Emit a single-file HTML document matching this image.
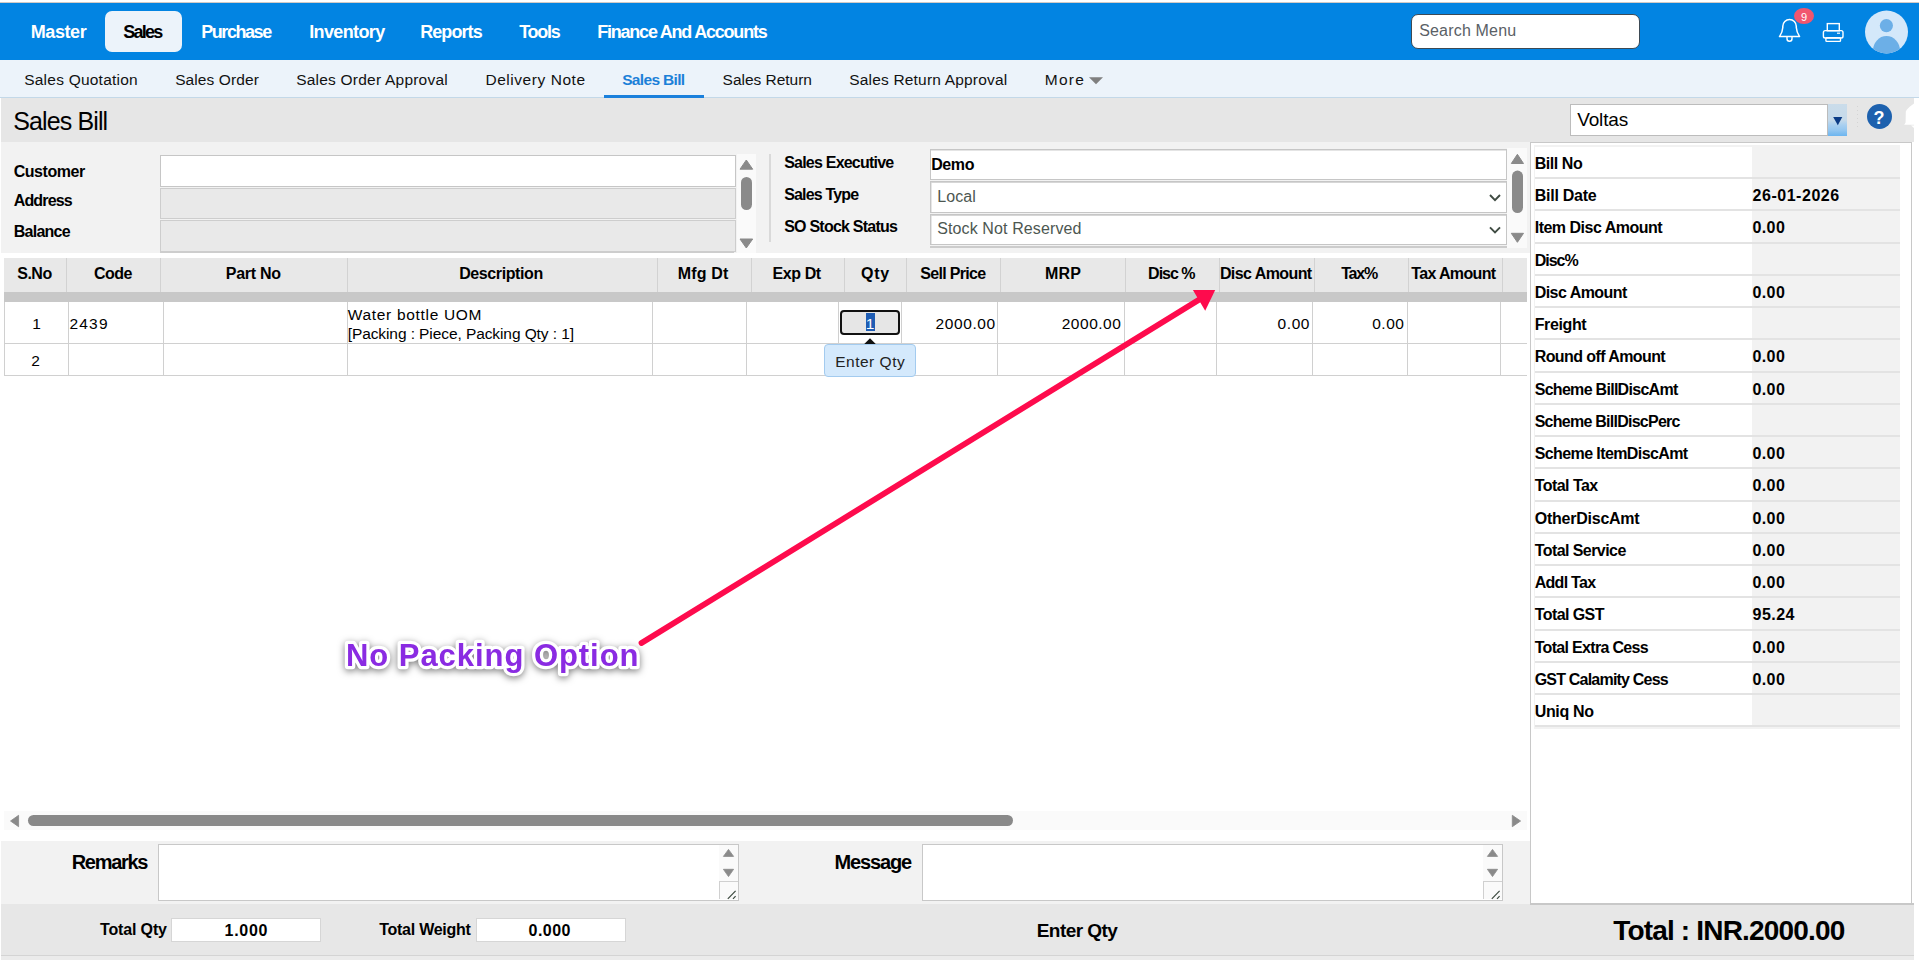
<!DOCTYPE html>
<html><head><meta charset="utf-8"><title>Sales Bill</title>
<style>
html,body{margin:0;padding:0;}
body{width:1919px;height:960px;overflow:hidden;position:relative;background:#fff;font-family:"Liberation Sans", sans-serif;}
.t{position:absolute;line-height:1;white-space:nowrap;}
</style></head><body>
<div style="position:absolute;left:0px;top:3px;width:1919px;height:57px;background:#0284e2"></div>
<div style="position:absolute;left:0px;top:2px;width:1919px;height:1px;background:#d2cac6"></div>
<div style="position:absolute;left:105px;top:11px;width:77px;height:41px;background:#ecf3fa;border-radius:7px"></div>
<div style="position:absolute;left:1411px;top:14px;width:227px;height:33px;background:#fff;border:1px solid #3d4a55;border-radius:7px"></div>
<div style="position:absolute;left:0px;top:60px;width:1919px;height:37px;background:#ecf3fa;border-bottom:1px solid #c3d8e8"></div>
<div style="position:absolute;left:604px;top:95.4px;width:100px;height:2.4px;background:#1a80dc"></div>
<div style="position:absolute;left:1px;top:98px;width:1913px;height:44px;background:#e6e6e6"></div>
<div style="position:absolute;left:1570px;top:104px;width:256px;height:30px;background:#fff;border:1px solid #bcbcbc"></div>
<div style="position:absolute;left:1828px;top:104.2px;width:19px;height:31.4px;background:linear-gradient(#cadcea 0%,#c6daea 50%,#a8cff0 66%,#93c6f0 82%,#6cb5ef 100%)"></div>
<div style="position:absolute;left:1857px;top:105.5px;width:1px;height:24.5px;background:repeating-linear-gradient(#d4d4d4 0 1px,transparent 1px 4px)"></div>
<div style="position:absolute;left:1867px;top:104px;width:25px;height:25px;background:#1d61ae;border-radius:50%"></div>
<div style="position:absolute;left:1px;top:142px;width:1529px;height:111px;background:#f2f2f2"></div>
<div style="position:absolute;left:160px;top:155px;width:574px;height:30px;background:#fff;border:1px solid #c6c6c6"></div>
<div style="position:absolute;left:160px;top:188px;width:574px;height:29px;background:#e9e9e9;border:1px solid #cdcdcd"></div>
<div style="position:absolute;left:160px;top:220px;width:574px;height:30px;background:#e9e9e9;border:1px solid #cdcdcd"></div>
<div style="position:absolute;left:160px;top:252px;width:574px;height:1px;background:#cdcdcd"></div>
<div style="position:absolute;left:737px;top:154px;width:19px;height:99px;background:#fafafa"></div>
<div style="position:absolute;left:769px;top:154px;width:2px;height:88px;background:#d9d9d9"></div>
<div style="position:absolute;left:930px;top:149px;width:575px;height:28.5px;background:#fff;border:1px solid #c6c6c6;box-shadow:inset 0 1px 0 #e4e4e4"></div>
<div style="position:absolute;left:930px;top:181.2px;width:575px;height:29.5px;background:#fff;border:1px solid #c6c6c6;box-shadow:inset 0 1px 0 #d6d6d6,inset 1px 0 0 #e6e6e6"></div>
<div style="position:absolute;left:930px;top:214.2px;width:575px;height:28.5px;background:#fff;border:1px solid #c6c6c6;box-shadow:inset 0 1px 0 #d6d6d6,inset 1px 0 0 #e6e6e6"></div>
<div style="position:absolute;left:930px;top:246.3px;width:577px;height:1.5px;background:#cccccc"></div>
<div style="position:absolute;left:1507px;top:148px;width:20px;height:100px;background:#fafafa"></div>
<div style="position:absolute;left:4px;top:258px;width:1523px;height:34px;background:#e8e8e8"></div>
<div style="position:absolute;left:66px;top:258px;width:1px;height:34px;background:#d2d2d2"></div>
<div style="position:absolute;left:160px;top:258px;width:1px;height:34px;background:#d2d2d2"></div>
<div style="position:absolute;left:347px;top:258px;width:1px;height:34px;background:#d2d2d2"></div>
<div style="position:absolute;left:657px;top:258px;width:1px;height:34px;background:#d2d2d2"></div>
<div style="position:absolute;left:751px;top:258px;width:1px;height:34px;background:#d2d2d2"></div>
<div style="position:absolute;left:844px;top:258px;width:1px;height:34px;background:#d2d2d2"></div>
<div style="position:absolute;left:906px;top:258px;width:1px;height:34px;background:#d2d2d2"></div>
<div style="position:absolute;left:1000px;top:258px;width:1px;height:34px;background:#d2d2d2"></div>
<div style="position:absolute;left:1125px;top:258px;width:1px;height:34px;background:#d2d2d2"></div>
<div style="position:absolute;left:1219px;top:258px;width:1px;height:34px;background:#d2d2d2"></div>
<div style="position:absolute;left:1314px;top:258px;width:1px;height:34px;background:#d2d2d2"></div>
<div style="position:absolute;left:1408px;top:258px;width:1px;height:34px;background:#d2d2d2"></div>
<div style="position:absolute;left:1502px;top:258px;width:1px;height:34px;background:#d2d2d2"></div>
<div style="position:absolute;left:4px;top:292px;width:1523px;height:10px;background:#c8c8c8"></div>
<div style="position:absolute;left:4px;top:302px;width:1px;height:74px;background:#d0d0d0"></div>
<div style="position:absolute;left:68px;top:302px;width:1px;height:74px;background:#d0d0d0"></div>
<div style="position:absolute;left:163px;top:302px;width:1px;height:74px;background:#d0d0d0"></div>
<div style="position:absolute;left:347px;top:302px;width:1px;height:74px;background:#d0d0d0"></div>
<div style="position:absolute;left:652px;top:302px;width:1px;height:74px;background:#d0d0d0"></div>
<div style="position:absolute;left:746px;top:302px;width:1px;height:74px;background:#d0d0d0"></div>
<div style="position:absolute;left:838px;top:302px;width:1px;height:74px;background:#d0d0d0"></div>
<div style="position:absolute;left:901px;top:302px;width:1px;height:74px;background:#d0d0d0"></div>
<div style="position:absolute;left:997px;top:302px;width:1px;height:74px;background:#d0d0d0"></div>
<div style="position:absolute;left:1124px;top:302px;width:1px;height:74px;background:#d0d0d0"></div>
<div style="position:absolute;left:1216px;top:302px;width:1px;height:74px;background:#d0d0d0"></div>
<div style="position:absolute;left:1312px;top:302px;width:1px;height:74px;background:#d0d0d0"></div>
<div style="position:absolute;left:1407px;top:302px;width:1px;height:74px;background:#d0d0d0"></div>
<div style="position:absolute;left:1500px;top:302px;width:1px;height:74px;background:#d0d0d0"></div>
<div style="position:absolute;left:4px;top:342.5px;width:1523px;height:1px;background:#d0d0d0"></div>
<div style="position:absolute;left:4px;top:375px;width:1523px;height:1px;background:#d0d0d0"></div>
<div style="position:absolute;left:840px;top:310px;width:56px;height:21px;background:#e6e6e6;border:2px solid #111;border-radius:4px"></div>
<div style="position:absolute;left:866px;top:313px;width:9px;height:18px;background:#1f5db4"></div>
<svg style="position:absolute;left:0;top:0" width="1919" height="960"><polygon points="864,344.2 870,338.2 876,344.2" fill="#111"/></svg>
<div style="position:absolute;left:824.2px;top:344.2px;width:89.5px;height:30.5px;background:#d4e9fc;border:1px solid #a3cbef;border-radius:4px"></div>
<div style="position:absolute;left:4px;top:811px;width:1523px;height:19px;background:#fafafa"></div>
<div style="position:absolute;left:27.5px;top:815px;width:985.5px;height:11px;background:#898989;border-radius:6px"></div>
<div style="position:absolute;left:1px;top:841px;width:1529px;height:63px;background:#f2f2f2"></div>
<div style="position:absolute;left:158px;top:844px;width:579px;height:55px;background:#fff;border:1px solid #c8c8c8"></div>
<div style="position:absolute;left:922px;top:844px;width:579px;height:55px;background:#fff;border:1px solid #c8c8c8"></div>
<div style="position:absolute;left:719px;top:845px;width:19px;height:36px;background:#fafafa"></div>
<div style="position:absolute;left:719px;top:881px;width:18px;height:17px;background:#fafafa;border-left:1px solid #d0d0d0;border-top:1px solid #d0d0d0"></div>
<div style="position:absolute;left:1483px;top:845px;width:19px;height:36px;background:#fafafa"></div>
<div style="position:absolute;left:1483px;top:881px;width:18px;height:17px;background:#fafafa;border-left:1px solid #d0d0d0;border-top:1px solid #d0d0d0"></div>
<div style="position:absolute;left:1530px;top:142px;width:380px;height:761px;background:#fff;border:1px solid #c8c8c8"></div>
<div style="position:absolute;left:1533.5px;top:145px;width:366.5px;height:583.5px;background:#f2f2f2"></div>
<div style="position:absolute;left:1534.5px;top:147.0px;width:217.5px;height:30.24px;background:#fff"></div>
<div style="position:absolute;left:1534.5px;top:177.24px;width:365px;height:2px;background:#e3e3e3"></div>
<div style="position:absolute;left:1534.5px;top:179.24px;width:217.5px;height:30.24px;background:#fff"></div>
<div style="position:absolute;left:1534.5px;top:209.48px;width:365px;height:2px;background:#e3e3e3"></div>
<div style="position:absolute;left:1534.5px;top:211.48px;width:217.5px;height:30.24px;background:#fff"></div>
<div style="position:absolute;left:1534.5px;top:241.72px;width:365px;height:2px;background:#e3e3e3"></div>
<div style="position:absolute;left:1534.5px;top:243.72px;width:217.5px;height:30.24px;background:#fff"></div>
<div style="position:absolute;left:1534.5px;top:273.96px;width:365px;height:2px;background:#e3e3e3"></div>
<div style="position:absolute;left:1534.5px;top:275.96px;width:217.5px;height:30.24px;background:#fff"></div>
<div style="position:absolute;left:1534.5px;top:306.2px;width:365px;height:2px;background:#e3e3e3"></div>
<div style="position:absolute;left:1534.5px;top:308.2px;width:217.5px;height:30.24px;background:#fff"></div>
<div style="position:absolute;left:1534.5px;top:338.44px;width:365px;height:2px;background:#e3e3e3"></div>
<div style="position:absolute;left:1534.5px;top:340.44px;width:217.5px;height:30.24px;background:#fff"></div>
<div style="position:absolute;left:1534.5px;top:370.68px;width:365px;height:2px;background:#e3e3e3"></div>
<div style="position:absolute;left:1534.5px;top:372.68px;width:217.5px;height:30.24px;background:#fff"></div>
<div style="position:absolute;left:1534.5px;top:402.92px;width:365px;height:2px;background:#e3e3e3"></div>
<div style="position:absolute;left:1534.5px;top:404.92px;width:217.5px;height:30.24px;background:#fff"></div>
<div style="position:absolute;left:1534.5px;top:435.16px;width:365px;height:2px;background:#e3e3e3"></div>
<div style="position:absolute;left:1534.5px;top:437.16px;width:217.5px;height:30.24px;background:#fff"></div>
<div style="position:absolute;left:1534.5px;top:467.4px;width:365px;height:2px;background:#e3e3e3"></div>
<div style="position:absolute;left:1534.5px;top:469.4px;width:217.5px;height:30.24px;background:#fff"></div>
<div style="position:absolute;left:1534.5px;top:499.64px;width:365px;height:2px;background:#e3e3e3"></div>
<div style="position:absolute;left:1534.5px;top:501.64px;width:217.5px;height:30.24px;background:#fff"></div>
<div style="position:absolute;left:1534.5px;top:531.88px;width:365px;height:2px;background:#e3e3e3"></div>
<div style="position:absolute;left:1534.5px;top:533.88px;width:217.5px;height:30.24px;background:#fff"></div>
<div style="position:absolute;left:1534.5px;top:564.12px;width:365px;height:2px;background:#e3e3e3"></div>
<div style="position:absolute;left:1534.5px;top:566.12px;width:217.5px;height:30.24px;background:#fff"></div>
<div style="position:absolute;left:1534.5px;top:596.36px;width:365px;height:2px;background:#e3e3e3"></div>
<div style="position:absolute;left:1534.5px;top:598.36px;width:217.5px;height:30.24px;background:#fff"></div>
<div style="position:absolute;left:1534.5px;top:628.6px;width:365px;height:2px;background:#e3e3e3"></div>
<div style="position:absolute;left:1534.5px;top:630.6px;width:217.5px;height:30.24px;background:#fff"></div>
<div style="position:absolute;left:1534.5px;top:660.84px;width:365px;height:2px;background:#e3e3e3"></div>
<div style="position:absolute;left:1534.5px;top:662.84px;width:217.5px;height:30.24px;background:#fff"></div>
<div style="position:absolute;left:1534.5px;top:693.08px;width:365px;height:2px;background:#e3e3e3"></div>
<div style="position:absolute;left:1534.5px;top:695.08px;width:217.5px;height:30.24px;background:#fff"></div>
<div style="position:absolute;left:1534.5px;top:725.32px;width:365px;height:2px;background:#e3e3e3"></div>
<div style="position:absolute;left:1px;top:904px;width:1913px;height:51px;background:#e7e7e7;border-bottom:1px solid #d4d4d4"></div>
<div style="position:absolute;left:1px;top:956px;width:1913px;height:4px;background:#ebebeb"></div>
<div style="position:absolute;left:1530px;top:903px;width:384px;height:1.5px;background:#c8c8c8"></div>
<div style="position:absolute;left:170.5px;top:917.5px;width:148px;height:22.5px;background:#fff;border:1px solid #d6d6d6"></div>
<div style="position:absolute;left:475.5px;top:917.5px;width:148px;height:22.5px;background:#fff;border:1px solid #d6d6d6"></div>
<svg style="position:absolute;left:0;top:0;overflow:visible" width="1919" height="960">
  <!-- bell -->
  <path d="M1780,36.6 L1799.6,36.6 Q1796.6,32.5 1796.3,27.5 L1796.3,26.3 A6.75,6.75 0 0 0 1782.8,26.3 L1782.8,27.5 Q1782.5,32.5 1779.5,36.6 Z" fill="none" stroke="#fff" stroke-width="1.5" stroke-linejoin="round"/>
  <path d="M1787,37 L1787,38.8 A2.5,2.5 0 0 0 1792,38.8 L1792,37" fill="none" stroke="#fff" stroke-width="1.4"/>
  <!-- badge -->
  <ellipse cx="1804" cy="16" rx="10" ry="8.1" fill="#f1566f"/>
  <!-- printer -->
  <rect x="1827.3" y="23.6" width="12" height="7.2" fill="none" stroke="#fff" stroke-width="1.4"/>
  <rect x="1823.4" y="30.6" width="19.6" height="7.4" rx="1.8" fill="none" stroke="#fff" stroke-width="1.4"/>
  <rect x="1825.9" y="37.8" width="14.6" height="3.6" rx="0.8" fill="none" stroke="#fff" stroke-width="1.4"/>
  <rect x="1837" y="32.6" width="3" height="1.2" fill="#fff"/>
  <!-- avatar -->
  <defs><clipPath id="avc"><circle cx="1886.5" cy="32" r="21.5"/></clipPath></defs>
  <circle cx="1886.5" cy="32" r="21.5" fill="#d4e8fa"/>
  <circle cx="1886.4" cy="25.6" r="6.6" fill="#6cafe7"/>
  <ellipse cx="1886.5" cy="51" rx="13.6" ry="15" fill="#6cafe7" clip-path="url(#avc)"/>
  <!-- more triangle -->
  <polygon points="1089,77.2 1103,77.2 1096,84.2" fill="#7f7f7f"/>
  <!-- voltas dropdown -->
  <polygon points="1833.2,117 1842.3,117 1837.8,125.2" fill="#0c3c86"/>
  <!-- title right white blob -->
  <path d="M1914,103.5 L1912,105 Q1907,108.5 1905.8,111.5 L1905.6,122.5 L1904.2,124.8 L1914,124.8 Z" fill="#fff"/><path d="M1911,125.5 L1914,128 L1914,125.5 Z" fill="#fff"/>
  <!-- left form scrollbar -->
  <polygon points="740,169.2 752.7,169.2 746.3,160" fill="#8a8a8a" stroke="#8a8a8a" stroke-width="1" stroke-linejoin="round"/>
  <rect x="741" y="177" width="11" height="33" rx="5.5" fill="#8a8a8a"/>
  <polygon points="740,239 752.7,239 746.3,248" fill="#8a8a8a" stroke="#8a8a8a" stroke-width="1" stroke-linejoin="round"/>
  <!-- right form scrollbar -->
  <polygon points="1511.3,163.5 1523.5,163.5 1517.4,154.3" fill="#8a8a8a" stroke="#8a8a8a" stroke-width="1" stroke-linejoin="round"/>
  <rect x="1512" y="170.6" width="11" height="42.4" rx="5.5" fill="#8a8a8a"/>
  <polygon points="1511.3,233.3 1523.5,233.3 1517.4,242.3" fill="#8a8a8a" stroke="#8a8a8a" stroke-width="1" stroke-linejoin="round"/>
  <!-- chevrons -->
  <polyline points="1490,195 1495,200.2 1500,195" fill="none" stroke="#3f4b42" stroke-width="1.9"/>
  <polyline points="1490,227.3 1495,232.5 1500,227.3" fill="none" stroke="#3f4b42" stroke-width="1.9"/>
  <!-- h scroll arrows -->
  <polygon points="10.5,821 18.6,815.3 18.6,826.7" fill="#898989" stroke="#898989" stroke-width="0.8" stroke-linejoin="round"/>
  <polygon points="1512.3,815.3 1520.6,821 1512.3,826.7" fill="#898989" stroke="#898989" stroke-width="0.8" stroke-linejoin="round"/>
  <!-- textarea arrows & resize -->
  <g id="ta1">
    <polygon points="723.4,856.4 733.6,856.4 728.5,849.4" fill="#8a8a8a" stroke="#8a8a8a" stroke-width="0.8" stroke-linejoin="round"/>
    <polygon points="723.4,869.3 733.6,869.3 728.5,876.6" fill="#8a8a8a" stroke="#8a8a8a" stroke-width="0.8" stroke-linejoin="round"/>
    <line x1="727.8" y1="898.8" x2="735.6" y2="890.8" stroke="#3a473d" stroke-width="1.2"/>
    <line x1="733" y1="898.8" x2="735.6" y2="896.2" stroke="#3a473d" stroke-width="1.2"/>
  </g>
  <use href="#ta1" x="764" y="0"/>
  <!-- annotation arrow -->
  <line x1="641.5" y1="643" x2="1201" y2="298.5" stroke="#fe0b4d" stroke-width="5.8" stroke-linecap="round"/>
  <polygon points="1192.9,290 1215.2,290 1205.2,310.8" fill="#fe0b4d"/>
  <!-- annotation text -->
  <text x="346" y="665.5" font-family="Liberation Sans" font-weight="700" font-size="31" letter-spacing="0.95" fill="#8a2be2" stroke="#fff" stroke-width="6.5" stroke-linejoin="round" paint-order="stroke" style="filter:drop-shadow(0px 2px 3.5px rgba(0,0,0,0.5))">No Packing Option</text>
</svg>

<span class="t" style="left:30.70px;top:23.26px;font-size:18px;font-weight:700;color:#fff;letter-spacing:-0.406px;">Master</span>
<span class="t" style="left:123.20px;top:23.26px;font-size:18px;font-weight:700;color:#000;letter-spacing:-1.762px;">Sales</span>
<span class="t" style="left:201.20px;top:23.26px;font-size:18px;font-weight:700;color:#fff;letter-spacing:-1.435px;">Purchase</span>
<span class="t" style="left:309.20px;top:23.26px;font-size:18px;font-weight:700;color:#fff;letter-spacing:-0.629px;">Inventory</span>
<span class="t" style="left:420.20px;top:23.26px;font-size:18px;font-weight:700;color:#fff;letter-spacing:-0.919px;">Reports</span>
<span class="t" style="left:519.20px;top:23.26px;font-size:18px;font-weight:700;color:#fff;letter-spacing:-1.293px;">Tools</span>
<span class="t" style="left:597.20px;top:23.26px;font-size:18px;font-weight:700;color:#fff;letter-spacing:-1.220px;">Finance And Accounts</span>
<span class="t" style="left:1801.00px;top:11.69px;font-size:11px;font-weight:400;color:#fff;letter-spacing:0.875px;">9</span>
<span class="t" style="left:1419.20px;top:23.46px;font-size:16px;font-weight:400;color:#5a6066;letter-spacing:0.183px;">Search Menu</span>
<span class="t" style="left:24.20px;top:71.88px;font-size:15.5px;font-weight:400;color:#111;letter-spacing:0.229px;">Sales Quotation</span>
<span class="t" style="left:175.20px;top:71.88px;font-size:15.5px;font-weight:400;color:#111;letter-spacing:0.090px;">Sales Order</span>
<span class="t" style="left:296.20px;top:71.88px;font-size:15.5px;font-weight:400;color:#111;letter-spacing:0.220px;">Sales Order Approval</span>
<span class="t" style="left:485.40px;top:71.88px;font-size:15.5px;font-weight:400;color:#111;letter-spacing:0.556px;">Delivery Note</span>
<span class="t" style="left:622.20px;top:71.88px;font-size:15.5px;font-weight:700;color:#1b80d8;letter-spacing:-0.660px;">Sales Bill</span>
<span class="t" style="left:722.60px;top:71.88px;font-size:15.5px;font-weight:400;color:#111;letter-spacing:-0.028px;">Sales Return</span>
<span class="t" style="left:849.20px;top:71.88px;font-size:15.5px;font-weight:400;color:#111;letter-spacing:0.188px;">Sales Return Approval</span>
<span class="t" style="left:1044.70px;top:71.88px;font-size:15.5px;font-weight:400;color:#111;letter-spacing:1.291px;">More</span>
<span class="t" style="left:13.20px;top:108.84px;font-size:25px;font-weight:400;color:#000;letter-spacing:-0.870px;">Sales Bill</span>
<span class="t" style="left:1577.20px;top:109.72px;font-size:19px;font-weight:400;color:#000;letter-spacing:-0.153px;">Voltas</span>
<span class="t" style="left:1873.50px;top:108.76px;font-size:18px;font-weight:700;color:#fff;">?</span>
<span class="t" style="left:13.70px;top:163.96px;font-size:16px;font-weight:700;color:#000;letter-spacing:-0.455px;">Customer</span>
<span class="t" style="left:13.70px;top:192.96px;font-size:16px;font-weight:700;color:#000;letter-spacing:-0.839px;">Address</span>
<span class="t" style="left:13.70px;top:224.46px;font-size:16px;font-weight:700;color:#000;letter-spacing:-0.729px;">Balance</span>
<span class="t" style="left:784.20px;top:155.46px;font-size:16px;font-weight:700;color:#000;letter-spacing:-0.783px;">Sales Executive</span>
<span class="t" style="left:784.20px;top:187.46px;font-size:16px;font-weight:700;color:#000;letter-spacing:-0.825px;">Sales Type</span>
<span class="t" style="left:784.20px;top:219.26px;font-size:16px;font-weight:700;color:#000;letter-spacing:-0.770px;">SO Stock Status</span>
<span class="t" style="left:931.20px;top:157.46px;font-size:16px;font-weight:700;color:#000;letter-spacing:-0.384px;">Demo</span>
<span class="t" style="left:937.20px;top:189.16px;font-size:16px;font-weight:400;color:#4d5751;letter-spacing:0.088px;">Local</span>
<span class="t" style="left:937.20px;top:221.36px;font-size:16px;font-weight:400;color:#4d5751;letter-spacing:0.119px;">Stock Not Reserved</span>
<span class="t" style="left:17.20px;top:266.46px;font-size:16px;font-weight:700;color:#000;letter-spacing:-0.484px;">S.No</span>
<span class="t" style="left:93.90px;top:266.46px;font-size:16px;font-weight:700;color:#000;letter-spacing:-0.467px;">Code</span>
<span class="t" style="left:225.80px;top:266.46px;font-size:16px;font-weight:700;color:#000;letter-spacing:-0.268px;">Part No</span>
<span class="t" style="left:459.20px;top:266.46px;font-size:16px;font-weight:700;color:#000;letter-spacing:-0.402px;">Description</span>
<span class="t" style="left:677.70px;top:266.46px;font-size:16px;font-weight:700;color:#000;letter-spacing:0.187px;">Mfg Dt</span>
<span class="t" style="left:772.40px;top:266.46px;font-size:16px;font-weight:700;color:#000;letter-spacing:-0.374px;">Exp Dt</span>
<span class="t" style="left:861.00px;top:266.46px;font-size:16px;font-weight:700;color:#000;letter-spacing:0.764px;">Qty</span>
<span class="t" style="left:920.20px;top:266.46px;font-size:16px;font-weight:700;color:#000;letter-spacing:-0.672px;">Sell Price</span>
<span class="t" style="left:1044.90px;top:266.46px;font-size:16px;font-weight:700;color:#000;letter-spacing:0.219px;">MRP</span>
<span class="t" style="left:1148.10px;top:266.46px;font-size:16px;font-weight:700;color:#000;letter-spacing:-0.994px;">Disc %</span>
<span class="t" style="left:1219.90px;top:266.46px;font-size:16px;font-weight:700;color:#000;letter-spacing:-0.578px;">Disc Amount</span>
<span class="t" style="left:1341.20px;top:266.46px;font-size:16px;font-weight:700;color:#000;letter-spacing:-1.203px;">Tax%</span>
<span class="t" style="left:1411.20px;top:266.46px;font-size:16px;font-weight:700;color:#000;letter-spacing:-0.630px;">Tax Amount</span>
<span class="t" style="left:32.20px;top:315.88px;font-size:15.5px;font-weight:400;color:#000;letter-spacing:0.375px;">1</span>
<span class="t" style="left:31.20px;top:352.88px;font-size:15.5px;font-weight:400;color:#000;letter-spacing:1.375px;">2</span>
<span class="t" style="left:69.50px;top:315.88px;font-size:15.5px;font-weight:400;color:#000;letter-spacing:1.172px;">2439</span>
<span class="t" style="left:347.70px;top:306.68px;font-size:15.5px;font-weight:400;color:#000;letter-spacing:0.689px;">Water bottle UOM</span>
<span class="t" style="left:347.70px;top:325.88px;font-size:15.5px;font-weight:400;color:#000;letter-spacing:-0.087px;">[Packing : Piece, Packing Qty : 1]</span>
<span class="t" style="left:935.60px;top:315.88px;font-size:15.5px;font-weight:400;color:#000;letter-spacing:0.595px;">2000.00</span>
<span class="t" style="left:1061.70px;top:315.88px;font-size:15.5px;font-weight:400;color:#000;letter-spacing:0.528px;">2000.00</span>
<span class="t" style="left:1277.50px;top:315.88px;font-size:15.5px;font-weight:400;color:#000;letter-spacing:0.609px;">0.00</span>
<span class="t" style="left:1372.20px;top:315.88px;font-size:15.5px;font-weight:400;color:#000;letter-spacing:0.509px;">0.00</span>
<span class="t" style="left:865.70px;top:315.88px;font-size:15.5px;font-weight:400;color:#fff;letter-spacing:-0.625px;">1</span>
<span class="t" style="left:835.20px;top:354.18px;font-size:15.5px;font-weight:400;color:#222;letter-spacing:0.504px;">Enter Qty</span>
<span class="t" style="left:71.70px;top:851.87px;font-size:20px;font-weight:700;color:#000;letter-spacing:-1.286px;">Remarks</span>
<span class="t" style="left:834.50px;top:851.87px;font-size:20px;font-weight:700;color:#000;letter-spacing:-1.133px;">Message</span>
<span class="t" style="left:1534.70px;top:155.96px;font-size:16px;font-weight:700;color:#000;letter-spacing:-0.445px;">Bill No</span>
<span class="t" style="left:1534.70px;top:188.16px;font-size:16px;font-weight:700;color:#000;letter-spacing:-0.252px;">Bill Date</span>
<span class="t" style="left:1752.50px;top:188.16px;font-size:16px;font-weight:700;color:#000;letter-spacing:0.540px;">26-01-2026</span>
<span class="t" style="left:1534.70px;top:220.46px;font-size:16px;font-weight:700;color:#000;letter-spacing:-0.495px;">Item Disc Amount</span>
<span class="t" style="left:1752.50px;top:220.46px;font-size:16px;font-weight:700;color:#000;letter-spacing:0.386px;">0.00</span>
<span class="t" style="left:1534.70px;top:252.66px;font-size:16px;font-weight:700;color:#000;letter-spacing:-1.008px;">Disc%</span>
<span class="t" style="left:1534.70px;top:284.96px;font-size:16px;font-weight:700;color:#000;letter-spacing:-0.538px;">Disc Amount</span>
<span class="t" style="left:1752.50px;top:284.96px;font-size:16px;font-weight:700;color:#000;letter-spacing:0.386px;">0.00</span>
<span class="t" style="left:1534.70px;top:317.16px;font-size:16px;font-weight:700;color:#000;letter-spacing:-0.370px;">Freight</span>
<span class="t" style="left:1534.70px;top:349.36px;font-size:16px;font-weight:700;color:#000;letter-spacing:-0.588px;">Round off Amount</span>
<span class="t" style="left:1752.50px;top:349.36px;font-size:16px;font-weight:700;color:#000;letter-spacing:0.386px;">0.00</span>
<span class="t" style="left:1534.70px;top:381.66px;font-size:16px;font-weight:700;color:#000;letter-spacing:-0.706px;">Scheme BillDiscAmt</span>
<span class="t" style="left:1752.50px;top:381.66px;font-size:16px;font-weight:700;color:#000;letter-spacing:0.386px;">0.00</span>
<span class="t" style="left:1534.70px;top:413.86px;font-size:16px;font-weight:700;color:#000;letter-spacing:-0.745px;">Scheme BillDiscPerc</span>
<span class="t" style="left:1534.70px;top:446.16px;font-size:16px;font-weight:700;color:#000;letter-spacing:-0.596px;">Scheme ItemDiscAmt</span>
<span class="t" style="left:1752.50px;top:446.16px;font-size:16px;font-weight:700;color:#000;letter-spacing:0.386px;">0.00</span>
<span class="t" style="left:1534.70px;top:478.36px;font-size:16px;font-weight:700;color:#000;letter-spacing:-0.545px;">Total Tax</span>
<span class="t" style="left:1752.50px;top:478.36px;font-size:16px;font-weight:700;color:#000;letter-spacing:0.386px;">0.00</span>
<span class="t" style="left:1534.70px;top:510.56px;font-size:16px;font-weight:700;color:#000;letter-spacing:-0.234px;">OtherDiscAmt</span>
<span class="t" style="left:1752.50px;top:510.56px;font-size:16px;font-weight:700;color:#000;letter-spacing:0.386px;">0.00</span>
<span class="t" style="left:1534.70px;top:542.86px;font-size:16px;font-weight:700;color:#000;letter-spacing:-0.568px;">Total Service</span>
<span class="t" style="left:1752.50px;top:542.86px;font-size:16px;font-weight:700;color:#000;letter-spacing:0.386px;">0.00</span>
<span class="t" style="left:1534.70px;top:575.06px;font-size:16px;font-weight:700;color:#000;letter-spacing:-0.711px;">Addl Tax</span>
<span class="t" style="left:1752.50px;top:575.06px;font-size:16px;font-weight:700;color:#000;letter-spacing:0.386px;">0.00</span>
<span class="t" style="left:1534.70px;top:607.36px;font-size:16px;font-weight:700;color:#000;letter-spacing:-0.572px;">Total GST</span>
<span class="t" style="left:1752.50px;top:607.36px;font-size:16px;font-weight:700;color:#000;letter-spacing:0.488px;">95.24</span>
<span class="t" style="left:1534.70px;top:639.56px;font-size:16px;font-weight:700;color:#000;letter-spacing:-0.680px;">Total Extra Cess</span>
<span class="t" style="left:1752.50px;top:639.56px;font-size:16px;font-weight:700;color:#000;letter-spacing:0.386px;">0.00</span>
<span class="t" style="left:1534.70px;top:671.76px;font-size:16px;font-weight:700;color:#000;letter-spacing:-0.796px;">GST Calamity Cess</span>
<span class="t" style="left:1752.50px;top:671.76px;font-size:16px;font-weight:700;color:#000;letter-spacing:0.386px;">0.00</span>
<span class="t" style="left:1534.70px;top:704.06px;font-size:16px;font-weight:700;color:#000;letter-spacing:-0.338px;">Uniq No</span>
<span class="t" style="left:100.00px;top:922.46px;font-size:16px;font-weight:700;color:#000;letter-spacing:-0.145px;">Total Qty</span>
<span class="t" style="left:224.50px;top:922.66px;font-size:16px;font-weight:700;color:#000;letter-spacing:0.738px;">1.000</span>
<span class="t" style="left:379.20px;top:922.46px;font-size:16px;font-weight:700;color:#000;letter-spacing:-0.256px;">Total Weight</span>
<span class="t" style="left:528.50px;top:922.66px;font-size:16px;font-weight:700;color:#000;letter-spacing:0.488px;">0.000</span>
<span class="t" style="left:1036.70px;top:920.92px;font-size:19px;font-weight:700;color:#000;letter-spacing:-0.541px;">Enter Qty</span>
<span class="t" style="left:1613.20px;top:916.70px;font-size:28px;font-weight:700;color:#000;letter-spacing:-0.817px;">Total : INR.2000.00</span>
</body></html>
